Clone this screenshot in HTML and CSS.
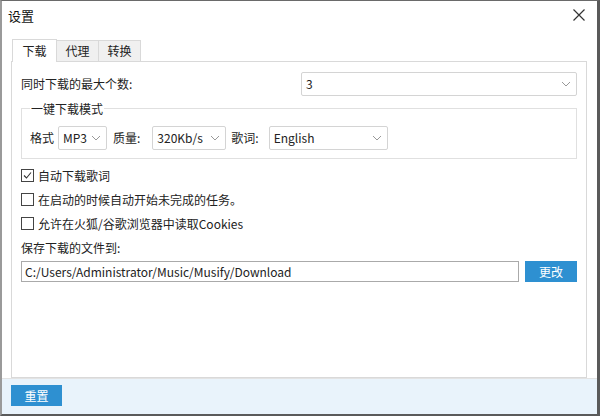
FILE: index.html
```html
<!DOCTYPE html>
<html lang="zh-CN">
<head>
  <meta charset="UTF-8" />
  <title>设置</title>
  <link rel="stylesheet" href="styles.css">
</head>
<body>
  <div class="window">
    <div class="titlebar">
      <span class="title">设置</span>
      <svg class="close" width="14" height="14" viewBox="0 0 14 14"><path d="M1.5 1.5 L12.5 12.5 M12.5 1.5 L1.5 12.5" stroke="#333" stroke-width="1.2" fill="none"/></svg>
    </div>

    <div class="content">
      <div class="tabs">
        <div class="tab active">下载</div>
        <div class="tab">代理</div>
        <div class="tab">转换</div>
      </div>

      <div class="panel">
        <div class="row">
          <span class="label">同时下载的最大个数:</span>
          <div class="select wide">
            <span>3</span>
            <svg width="10" height="6" viewBox="0 0 10 6"><path d="M1 1 L5 5 L9 1" stroke="#999" fill="none"/></svg>
          </div>
        </div>

        <fieldset class="group">
          <legend>一键下载模式</legend>
          <div class="group-row">
            <span class="opt-label">格式</span>
            <div class="select fmt">
              <span>MP3</span>
              <svg width="10" height="6" viewBox="0 0 10 6"><path d="M1 1 L5 5 L9 1" stroke="#999" fill="none"/></svg>
            </div>
            <span class="opt-label">质量:</span>
            <div class="select quality">
              <span>320Kb/s</span>
              <svg width="10" height="6" viewBox="0 0 10 6"><path d="M1 1 L5 5 L9 1" stroke="#999" fill="none"/></svg>
            </div>
            <span class="opt-label">歌词:</span>
            <div class="select lang">
              <span>English</span>
              <svg width="10" height="6" viewBox="0 0 10 6"><path d="M1 1 L5 5 L9 1" stroke="#999" fill="none"/></svg>
            </div>
          </div>
        </fieldset>

        <div class="checks">
          <label class="check">
            <span class="box"><svg width="11" height="11" viewBox="0 0 11 11"><path d="M2 5.5 L4.5 8 L9 2.5" stroke="#333" stroke-width="1.1" fill="none"/></svg></span>
            自动下载歌词
          </label>
          <label class="check">
            <span class="box"></span>
            在启动的时候自动开始未完成的任务。
          </label>
          <label class="check">
            <span class="box"></span>
            允许在火狐/谷歌浏览器中读取Cookies
          </label>
        </div>

        <div class="save-label">保存下载的文件到:</div>
        <div class="path-row">
          <div class="path">C:/Users/Administrator/Music/Musify/Download</div>
          <button class="btn">更改</button>
        </div>
      </div>
    </div>

    <div class="footer">
      <button class="btn reset">重置</button>
    </div>
  </div>
</body>
</html>
```

FILE: styles.css
```css
* {
  margin: 0;
  padding: 0;
  box-sizing: border-box;
}

body {
  width: 600px;
  height: 416px;
  overflow: hidden;
  font-family: "Noto Sans CJK SC", "Noto Sans", sans-serif;
  font-size: 12px;
  color: #222;
  background: #fff;
}

.window {
  width: 600px;
  height: 416px;
  border: 1px solid #6a6a6a;
  border-left: 2px solid #9a9a9a;
  border-right: 3px solid #5a5a5a;
  border-bottom: 2px solid #5a5a5a;
  background: #fff;
  display: flex;
  flex-direction: column;
}

.titlebar {
  height: 29px;
  display: flex;
  align-items: center;
  justify-content: space-between;
  padding: 0 11px 0 6px;
}

.title {
  font-size: 13px;
  color: #111;
}

.content {
  flex: 1;
  padding: 8px 10px 0 9px;
  display: flex;
  flex-direction: column;
}

.tabs {
  display: flex;
  align-items: flex-end;
  height: 23px;
  padding-left: 1px;
}

.tab {
  width: 43px;
  height: 21px;
  background: #f0f0f0;
  border: 1px solid #d9d9d9;
  border-bottom: none;
  margin-left: -1px;
  display: flex;
  align-items: center;
  justify-content: center;
  font-size: 12px;
}

.tab.active {
  height: 23px;
  width: 45px;
  background: #fff;
  margin-left: 0;
  position: relative;
  top: 1px;
  z-index: 1;
}

.panel {
  border: 1px solid #d9d9d9;
  padding: 10px 9px 0 9px;
  height: 317px;
  flex: none;
}

.row {
  display: flex;
  align-items: center;
  justify-content: space-between;
  height: 24px;
}

.select {
  height: 24px;
  border: 1px solid #d4d4d4;
  border-radius: 2px;
  background: #fff;
  display: flex;
  align-items: center;
  justify-content: space-between;
  padding: 0 5px 0 4px;
}

.select svg {
  flex: none;
}

.select.wide {
  width: 276px;
}

.select.fmt {
  width: 49px;
  margin-right: 6px;
}

.select.quality {
  width: 74px;
  margin-left: 8px;
  margin-right: 5px;
}

.select.lang {
  width: 119px;
  margin-left: 6px;
}

.group {
  margin-top: 4px;
  border: 1px solid #e0e0e0;
  padding: 0 8px 0 8px;
  height: 59px;
}

.group legend {
  padding: 0 1px;
  font-size: 12px;
}

.group-row {
  margin-top: 9px;
  display: flex;
  align-items: center;
}

.opt-label {
  margin-right: 4px;
}

.checks {
  margin-top: 8px;
  display: flex;
  flex-direction: column;
  gap: 6px;
}

.check {
  display: flex;
  align-items: center;
  gap: 4px;
  height: 18px;
}

.box {
  width: 13px;
  height: 13px;
  border: 1px solid #444;
  display: flex;
  align-items: center;
  justify-content: center;
  background: #fff;
}

.save-label {
  margin-top: 6px;
  height: 16px;
}

.path-row {
  margin-top: 6px;
  display: flex;
  gap: 6px;
}

.path {
  width: 498px;
  height: 21px;
  border: 1px solid #aaa;
  padding: 0 3px;
  line-height: 19px;
  font-size: 12px;
}

.btn {
  width: 52px;
  height: 21px;
  background: #2e90d1;
  color: #fff;
  border: none;
  font-family: "Noto Sans CJK SC", sans-serif;
  font-size: 12px;
}

.footer {
  height: 37px;
  background: #e9f3fb;
  border-top: 1px solid #e3e3e3;
  padding: 6px 0 0 9px;
}

.reset {
  width: 51px;
  height: 21px;
}
```
